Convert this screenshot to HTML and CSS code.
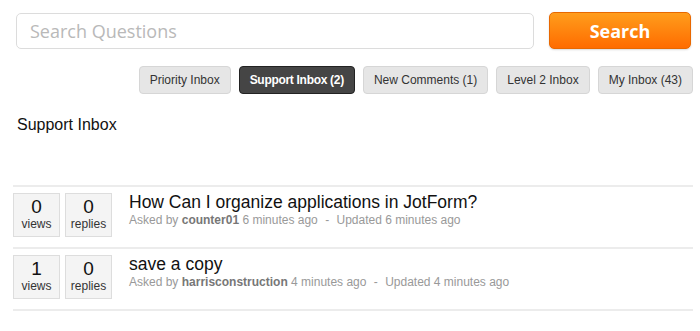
FILE: index.html
```html
<!DOCTYPE html>
<html lang="en">

<head>
    <meta charset="UTF-8">
    <title>Support Inbox</title>
    <link rel="stylesheet" href="styles.css">
</head>

<body>
    <div id="page">
        <div class="search-row">
            <input type="text" class="search-input" placeholder="Search Questions">
            <button class="search-btn">Search</button>
        </div>
        <ul class="tabs">
            <li class="tab">Priority Inbox</li>
            <li class="tab active">Support Inbox (2)</li>
            <li class="tab">New Comments (1)</li>
            <li class="tab">Level 2 Inbox</li>
            <li class="tab">My Inbox (43)</li>
        </ul>
        <h2 class="inbox-title">Support Inbox</h2>
        <ul class="questions">
            <li class="question">
                <div class="stat"><span class="num">0</span><span class="label">views</span></div>
                <div class="stat"><span class="num">0</span><span class="label">replies</span></div>
                <div class="q-body">
                    <a class="q-title">How Can I organize applications in JotForm?</a>
                    <p class="q-meta">Asked by <b>counter01</b> 6 minutes ago <span class="sep">-</span> Updated 6 minutes ago</p>
                </div>
            </li>
            <li class="question">
                <div class="stat"><span class="num">1</span><span class="label">views</span></div>
                <div class="stat"><span class="num">0</span><span class="label">replies</span></div>
                <div class="q-body">
                    <a class="q-title">save a copy</a>
                    <p class="q-meta">Asked by <b>harrisconstruction</b> 4 minutes ago <span class="sep">-</span> Updated 4 minutes ago</p>
                </div>
            </li>
        </ul>
    </div>
</body>

</html>
```

FILE: styles.css
```css
* {
    margin: 0;
    padding: 0;
    list-style: none;
    box-sizing: border-box;
}

body {
    background: #fff;
    font-family: "Liberation Sans", Arial, sans-serif;
    color: #111;
}

#page {
    padding: 12px 7px 0 13px;
}

.search-row {
    display: flex;
    gap: 15px;
    padding: 0 2px 0 3px;
}

.search-input {
    flex: 1;
    height: 36px;
    margin-top: 1px;
    border: 1px solid #dcdcdc;
    border-radius: 5px;
    padding: 0 13px;
    font-family: "Open Sans", "DejaVu Sans", sans-serif;
    font-size: 18px;
    color: #333;
    outline: none;
}

.search-input::placeholder {
    color: #b9b9b9;
}

.search-btn {
    width: 142px;
    height: 37px;
    border: 1px solid #e86800;
    border-radius: 5px;
    background: linear-gradient(#ff9d1c, #ff6c00);
    color: #fff;
    font-family: "Open Sans", "DejaVu Sans", sans-serif;
    font-weight: bold;
    font-size: 18px;
    box-shadow: 0 1px 2px rgba(0, 0, 0, 0.15);
}

.tabs {
    display: flex;
    justify-content: flex-end;
    gap: 8px;
    margin-top: 17px;
}

.tab {
    height: 28px;
    line-height: 26px;
    padding: 0 10px;
    border: 1px solid #d6d6d6;
    border-radius: 4px;
    background: #e6e6e6;
    font-size: 12px;
    color: #333;
}

.tab.active {
    background: #454545;
    border-color: #222;
    color: #fff;
    font-weight: bold;
    letter-spacing: -0.3px;
}

.inbox-title {
    font-size: 16px;
    font-weight: normal;
    margin: 21px 0 0 4px;
    line-height: 20px;
}

.questions {
    margin-top: 50px;
    border-top: 2px solid #ececec;
}

.question {
    display: flex;
    padding: 6px 0 10px;
    border-bottom: 2px solid #ececec;
}

.stat {
    width: 47px;
    height: 44px;
    margin-right: 5px;
    border: 1px solid #ddd;
    background: #f4f4f4;
    display: flex;
    flex-direction: column;
    align-items: center;
    padding-top: 2px;
}

.num {
    font-size: 19px;
    line-height: 21px;
}

.label {
    font-size: 12px;
    line-height: 15px;
    color: #333;
}

.q-body {
    margin-left: 12px;
}

.q-title {
    display: block;
    font-size: 17.5px;
    line-height: 19px;
    color: #111;
}

.q-meta {
    margin-top: 1px;
    font-size: 12px;
    color: #999;
}

.q-meta b {
    color: #777;
}

.sep {
    margin: 0 4px;
}
```
